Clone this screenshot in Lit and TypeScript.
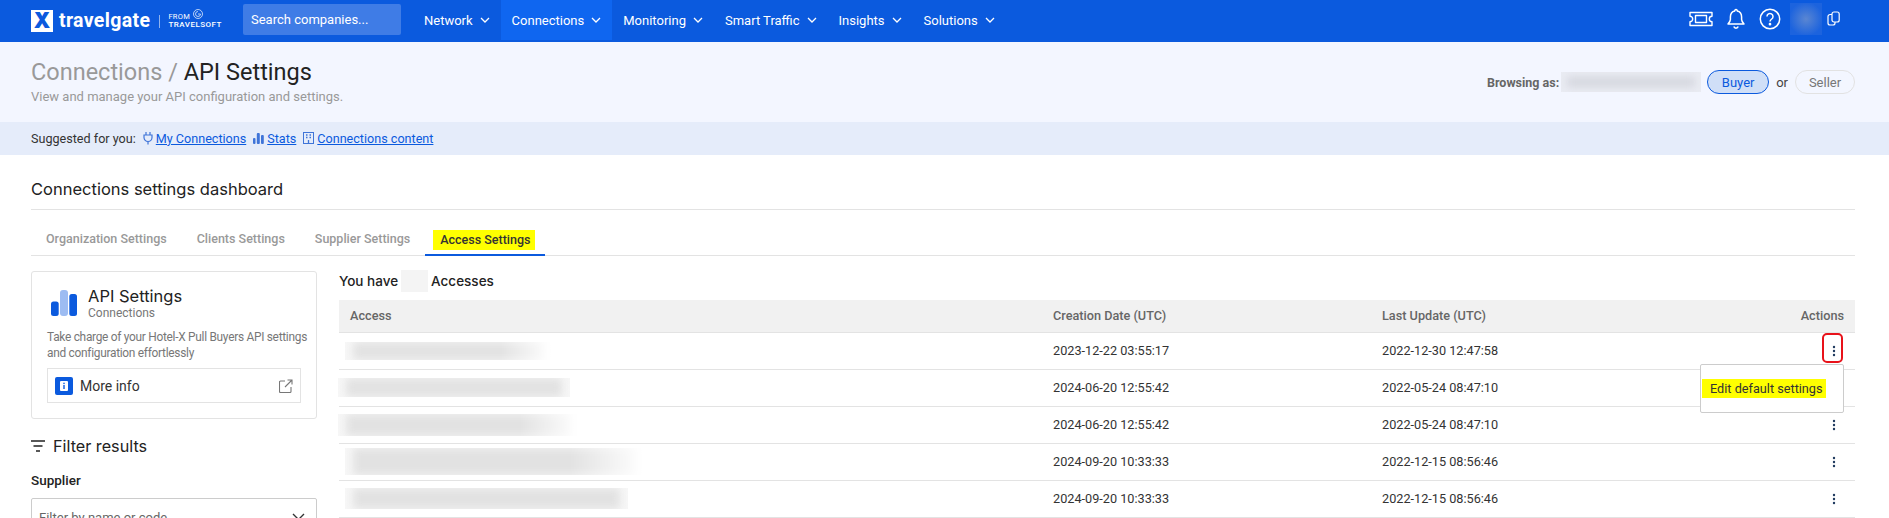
import { LitElement, html, css, svg } from "lit";
import { customElement } from "lit/decorators.js";

const chevron = svg`<svg class="chev" viewBox="0 0 10 6" width="10" height="6"><path d="M1 1l4 4 4-4" fill="none" stroke="currentColor" stroke-width="1.3"/></svg>`;
const dots = html`<svg class="dots" viewBox="0 0 4 12" width="4" height="12"><circle cx="2" cy="2" r="1.2"/><circle cx="2" cy="6" r="1.2"/><circle cx="2" cy="10" r="1.2"/></svg>`;

const rows = [
  { c: "2023-12-22 03:55:17", u: "2022-12-30 12:47:58", l: -5, w: 208, h: 18, open: true, fade: true },
  { c: "2024-06-20 12:55:42", u: "2022-05-24 08:47:10", l: -12, w: 232, h: 19, open: false, fade: false },
  { c: "2024-06-20 12:55:42", u: "2022-05-24 08:47:10", l: -12, w: 242, h: 22, open: false, fade: true },
  { c: "2024-09-20 10:33:33", u: "2022-12-15 08:56:46", l: -5, w: 300, h: 27, open: false, fade: true },
  { c: "2024-09-20 10:33:33", u: "2022-12-15 08:56:46", l: -5, w: 283, h: 21, open: false, fade: false },
];

@customElement("app-root")
export class AppRoot extends LitElement {
  static styles = css`
    :host { display: block; height: 518px; overflow: hidden; background: #fff; font-family: Roboto, "Liberation Sans", sans-serif; color: #333; font-size: 12.7px; }
    * { box-sizing: border-box; }
    svg { display: block; flex: none; }
    .nav { height: 42px; background: #0b5ade; color: #fff; display: flex; align-items: flex-start; padding-left: 31px; }
    .logo { display: flex; align-items: center; height: 42px; width: 212px; flex: none; }
    .mark { width: 22px; height: 22px; background: #fff; color: #0b5ade; font: 900 21px/22px Inter, Roboto, sans-serif; text-align: center; flex: none; }
    .word { font: 700 19.5px/22px Roboto, sans-serif; letter-spacing: .35px; margin-left: 6px; }
    .sep { width: 1px; height: 13px; background: #8fb3ef; margin: 0 8px 0 9px; }
    .from { display: flex; flex-direction: column; font: 400 7.5px/8px Roboto, sans-serif; letter-spacing: .3px; position: relative; }
    .from b { font-weight: 500; font-size: 8px; letter-spacing: .5px; }
    .swirl { position: absolute; left: 24px; top: -5px; }
    .search { width: 158px; height: 31px; margin-top: 4px; background: #3f7ce6; border-radius: 2px; padding: 0 8px; line-height: 31px; font-size: 13px; flex: none; }
    .items { display: flex; margin-left: 12px; }
    .item { display: flex; align-items: center; gap: 7px; height: 40px; padding: 0 11px; font-size: 13px; }
    .item.on { background: #0f66f0; }
    .tools { margin-left: auto; display: flex; align-items: center; height: 37px; padding-right: 49px; }
    .avatar { width: 32px; height: 32px; background: radial-gradient(#5a86d2, #1c63de 75%); margin: 0 5px 0 9px; }
    .head { height: 80px; background: #f3f6ff; display: flex; justify-content: space-between; padding: 16px 34px 0 31px; }
    h1 { margin: 0; font: 400 23.5px/28px Roboto, sans-serif; color: #222; }
    h1 span { color: #999; }
    .sub { color: #999; font-size: 13px; line-height: 20px; margin-top: 1px; }
    .browse { display: flex; align-items: center; height: 24px; margin-top: 12px; font-size: 12.5px; }
    .browse b { color: #666; font-weight: 700; }
    .blurbox { display: block; background: #eaecf3; overflow: hidden; }
    .who { width: 140px; height: 20px; margin: 0 6px 0 2px; padding: 5px 6px; }
    .who i { display: block; height: 10px; background: #d4d6de; filter: blur(4px); }
    .pill { height: 24px; border-radius: 12px; display: flex; align-items: center; justify-content: center; font-size: 13px; }
    .buyer { width: 62px; background: #d0dff7; border: 1px solid #0b5ade; color: #0b5ade; }
    .or { margin: 0 7px; color: #444; font-size: 13px; }
    .seller { width: 60px; border: 1px solid #e2e2e2; color: #777; }
    .suggest { height: 33px; background: #e5ecfa; display: flex; align-items: center; padding: 0 0 1px 31px; font-size: 12.6px; color: #333; }
    .suggest a { color: #0b5ade; text-decoration: underline; }
    .suggest svg { margin: 0 3px 0 7px; }
    .main { padding: 24px 34px 0 31px; }
    h2 { margin: 0; font: 400 16.5px/20px Inter, Roboto, sans-serif; color: #222; padding-bottom: 10px; border-bottom: 1px solid #e3e3e3; }
    .tabs { display: flex; height: 46px; border-bottom: 1px solid #e3e3e3; padding-top: 18px; }
    .tab { padding: 0 15px; height: 28px; line-height: 22px; color: #999; font-size: 12.5px; font-weight: 500; white-space: nowrap; }
    .tab.on { color: #333; border-bottom: 2.5px solid #0b5ade; padding: 0 10px 0 8px; }
    .tab.on mark { display: block; background: #ff0; color: #333; height: 20px; line-height: 20px; padding: 0 4px 0 7px; margin-top: 2px; }
    .body { display: grid; grid-template-columns: 286px 1fr; column-gap: 22px; margin-top: 14px; }
    .card { height: 148px; margin-top: 1px; border: 1px solid #e3e3e3; border-radius: 3px; padding: 14px 15px 15px; }
    .top { display: flex; align-items: center; gap: 11px; margin-left: 4px; }
    .top h3 { margin: 0; font: 400 16.5px/20px Inter, Roboto, sans-serif; color: #222; }
    .top small { display: block; color: #777; font-size: 12px; line-height: 14px; }
    .desc { margin: 9px -10px 0 0; color: #777; font-size: 11.9px; letter-spacing: -.28px; line-height: 16px; white-space: nowrap; }
    .more { height: 35px; border: 1px solid #e3e3e3; display: flex; align-items: center; padding: 0 7px; margin-top: 7px; font-size: 14px; color: #333; gap: 7px; }
    .info { width: 18px; height: 18px; background: #0b5ade; border-radius: 2px; display: flex; align-items: center; justify-content: center; flex: none; }
    .more .ext { margin-left: auto; }
    .filter { display: flex; align-items: center; gap: 8px; margin-top: 16px; font: 400 16.2px/22px Inter, Roboto, sans-serif; color: #222; }
    label { display: block; margin-top: 14px; font-size: 13.5px; font-weight: 500; line-height: 18px; color: #222; }
    .select { height: 38px; margin-top: 9px; border: 1px solid #ccc; border-radius: 2px; display: flex; justify-content: space-between; align-items: center; padding: 0 11px 0 7px; color: #666; font-size: 13px; }
    .count { display: flex; align-items: center; height: 22px; font: 500 13.5px/22px Inter, Roboto, sans-serif; color: #222; }
    .count i { width: 27px; height: 22px; background: #f4f4f4; margin: 0 3px; display: block; }
    .table { margin-top: 8px; }
    .tr { display: grid; grid-template-columns: 703px 329px 1fr 60px; align-items: center; height: 37px; padding: 0 11px 1px; border-bottom: 1px solid #e3e3e3; font-size: 12.7px; color: #333; position: relative; }
    .tr.th { height: 33px; background: #f1f1f1; color: #666; font-weight: 500; font-size: 12.7px; }
    .tr .act { text-align: right; }
    .name { display: block; background: #f7f7f7; overflow: hidden; }
    .name.fade { -webkit-mask-image: linear-gradient(90deg, #000 75%, transparent); mask-image: linear-gradient(90deg, #000 75%, transparent); }
    .name i { display: block; margin: 0 8px; background: #e2e2e2; filter: blur(4px); }
    .cell-act { display: flex; justify-content: flex-end; padding-right: 8.5px; }
    .dots { fill: #1f3a5f; }
    .red { position: absolute; right: 12px; top: 0; width: 21px; height: 30px; border: 2px solid #e8121a; border-radius: 5px; }
    .menu { position: absolute; right: 11px; top: 31px; width: 144px; height: 49px; background: #fff; border: 1px solid #ccc; border-radius: 2px; padding: 14px 0 0 1px; z-index: 2; }
    .menu mark { display: block; width: 124px; height: 19px; line-height: 19px; background: #ff0; color: #333; padding-left: 8px; font-size: 12.7px; white-space: nowrap; }
  `;

  render() {
    return html`
      <div class="nav">
        <div class="logo">
          <div class="mark">X</div>
          <div class="word">travelgate</div>
          <div class="sep"></div>
          <div class="from">
            <span>FROM</span><b>TRAVELSOFT</b>
            <svg class="swirl" width="12" height="12" viewBox="0 0 12 12" fill="none" stroke="#fff" stroke-width=".7"><circle cx="6" cy="6" r="4.5"/><path d="M6 3.5a2.5 2.5 0 1 0 2.5 2.5H6"/></svg>
          </div>
        </div>
        <div class="search">Search companies...</div>
        <div class="items">
          ${["Network", "Connections", "Monitoring", "Smart Traffic", "Insights", "Solutions"].map(
            (n) => html`<div class="item ${n === "Connections" ? "on" : ""}">${n}${chevron}</div>`
          )}
        </div>
        <div class="tools">
          <svg width="24" height="16" viewBox="0 0 24 16" fill="none" stroke="#fff" stroke-width="1.4" stroke-linejoin="round"><path d="M1 1.5h22v3.8a2.7 2.7 0 0 0 0 5.4v3.8H1v-3.8a2.7 2.7 0 0 0 0-5.4z"/><rect x="6.5" y="4.5" width="11" height="7"/></svg>
          <svg style="margin-left:13px" width="20" height="22" viewBox="0 0 20 22" fill="none" stroke="#fff" stroke-width="1.5" stroke-linejoin="round"><path d="M10 1.5a1.2 1.2 0 0 1 1.2 1.4c3 .6 4.4 3 4.4 6v2.6c0 1.6 1.2 3 2.4 4.5H2c1.2-1.5 2.4-2.9 2.4-4.5V8.9c0-3 1.4-5.4 4.4-6A1.2 1.2 0 0 1 10 1.5z"/><path d="M7.8 18.5a2.3 2.3 0 0 0 4.4 0"/></svg>
          <svg style="margin-left:13px" width="22" height="22" viewBox="0 0 22 22" fill="none" stroke="#fff" stroke-width="1.5"><circle cx="11" cy="11" r="9.7"/><path d="M8 8.5a3 3 0 1 1 4.7 2.5c-1 .7-1.7 1.3-1.7 2.5"/><circle cx="11" cy="16.2" r=".6" fill="#fff"/></svg>
          <div class="avatar"></div>
          <svg width="13" height="15" viewBox="0 0 13 15" fill="none" stroke="#fff" stroke-width="1.2"><rect x="5" y="1" width="7.2" height="10" rx="2"/><path d="M5 3.5H3a2 2 0 0 0-2 2V12a2 2 0 0 0 2 2h3a2 2 0 0 0 2-2v-1"/></svg>
        </div>
      </div>

      <div class="head">
        <div>
          <h1><span>Connections / </span>API Settings</h1>
          <div class="sub">View and manage your API configuration and settings.</div>
        </div>
        <div class="browse">
          <b>Browsing as:</b>
          <span class="blurbox who"><i></i></span>
          <div class="pill buyer">Buyer</div>
          <span class="or">or</span>
          <div class="pill seller">Seller</div>
        </div>
      </div>

      <div class="suggest">
        <span>Suggested for you:</span>
        <svg width="10" height="14" viewBox="0 0 10 14" fill="none" stroke="#3f74d8" stroke-width="1.2"><path d="M3 1v3M7 1v3M1 4h8v2.5a4 4 0 0 1-8 0zM5 10.5V13.5"/></svg>
        <a>My Connections</a>
        <svg width="11" height="11" viewBox="0 0 11 11" fill="#3f74d8"><rect x="0" y="5" width="2.5" height="6" rx="1"/><rect x="3.8" y="0" width="3" height="11" rx="1"/><rect x="8" y="2" width="2.8" height="9" rx="1"/></svg>
        <a>Stats</a>
        <svg width="11" height="12" viewBox="0 0 11 12" fill="none" stroke="#3f74d8"><rect x=".5" y=".5" width="10" height="11"/><path d="M3 3h1.5M6.5 3H8M3 5.5h1.5M6.5 5.5H8M5.5 8v3.5" stroke-width="1.3"/></svg>
        <a>Connections content</a>
      </div>

      <div class="main">
        <h2>Connections settings dashboard</h2>
        <div class="tabs">
          <div class="tab">Organization Settings</div>
          <div class="tab">Clients Settings</div>
          <div class="tab">Supplier Settings</div>
          <div class="tab on"><mark>Access Settings</mark></div>
        </div>
        <div class="body">
          <div>
            <div class="card">
              <div class="top">
                <svg width="26" height="26" viewBox="0 0 26 26"><rect x="0" y="11.5" width="7.7" height="14.5" rx="2.5" fill="#0b5ade"/><rect x="9" y="0" width="8" height="26" rx="3" fill="#9dbcf2"/><rect x="18.3" y="4" width="7.7" height="22" rx="2.5" fill="#0b5ade"/></svg>
                <div><h3>API Settings</h3><small>Connections</small></div>
              </div>
              <p class="desc">Take charge of your Hotel-X Pull Buyers API settings<br />and configuration effortlessly</p>
              <div class="more">
                <div class="info"><svg width="8" height="10" viewBox="0 0 8 10"><rect width="8" height="10" rx="1" fill="#fff"/><rect x="3.3" y="4" width="1.4" height="4" fill="#0b5ade"/><rect x="3.3" y="1.7" width="1.4" height="1.4" fill="#0b5ade"/></svg></div>
                <span>More info</span>
                <svg class="ext" width="14" height="14" viewBox="0 0 14 14" fill="none" stroke="#777" stroke-width="1.1"><path d="M6 2H1.5a1 1 0 0 0-1 1v9.5a1 1 0 0 0 1 1H11a1 1 0 0 0 1-1V8M6 8l7-7M8.5 1H13v4.5"/></svg>
              </div>
            </div>
            <div class="filter">
              <svg width="14" height="12" viewBox="0 0 14 12" stroke="#222" stroke-width="1.3"><path d="M0 1h14M2.5 6h9M5 11h4"/></svg>
              <span>Filter results</span>
            </div>
            <label>Supplier</label>
            <div class="select">
              <span>Filter by name or code</span>
              <svg width="13" height="8" viewBox="0 0 13 8" fill="none" stroke="#333" stroke-width="1.4"><path d="M1 1l5.5 5.5L12 1"/></svg>
            </div>
          </div>
          <div>
            <div class="count">You have <i></i> Accesses</div>
            <div class="table">
              <div class="tr th"><span>Access</span><span>Creation Date (UTC)</span><span>Last Update (UTC)</span><span class="act">Actions</span></div>
              ${rows.map(
                (r) => html`<div class="tr">
                  <span class="name ${r.fade ? "fade" : ""}" style="margin-left:${r.l}px;width:${r.w}px;height:${r.h}px"><i style="height:${r.h}px"></i></span>
                  <span>${r.c}</span><span>${r.u}</span>
                  <span class="cell-act">
                    ${dots}
                    ${r.open ? html`<div class="red"></div><div class="menu"><mark>Edit default settings</mark></div>` : ""}
                  </span>
                </div>`
              )}
            </div>
          </div>
        </div>
      </div>
    `;
  }
}
